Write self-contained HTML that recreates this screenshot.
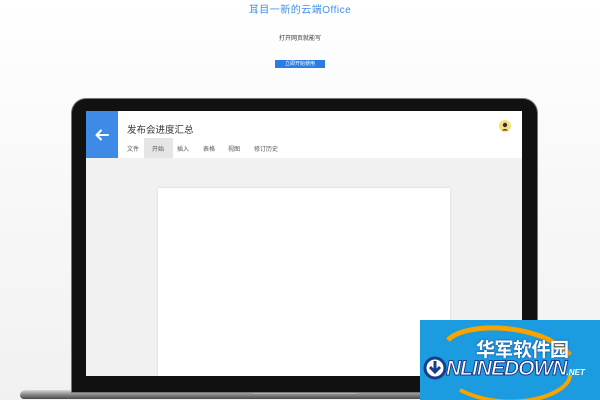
<!DOCTYPE html>
<html><head><meta charset="utf-8"><style>
*{margin:0;padding:0;box-sizing:border-box}
body{width:600px;height:400px;overflow:hidden;position:relative;background:linear-gradient(#fff 0%,#f9f9f9 40%,#f1f1f1 100%);font-family:"Liberation Sans","Noto Sans CJK SC",sans-serif}
.abs{position:absolute}
.tab{position:absolute;top:33px;font-size:6px;color:#555;white-space:nowrap}
</style></head><body>
<div class="abs" style="left:0;top:1px;width:600px;text-align:center;font-size:10px;color:#3d8fe6;letter-spacing:0.5px">耳目一新的云端Office</div>
<div class="abs" style="left:0;top:33px;width:600px;text-align:center;font-size:6px;color:#333">打开网页就能写</div>
<div class="abs" style="left:275px;top:60px;width:50px;height:8px;background:#2a7de1;color:#fff;font-size:5px;line-height:8px;text-align:center">立即开始使用</div>

<div class="abs" style="left:20px;top:390px;width:580px;height:9px;background:linear-gradient(#d8d8d8,#8a8a8a 50%,#4a4a4a);border-radius:8px 0 0 6px"></div>
<div class="abs" style="left:251px;top:390px;width:108px;height:4px;background:linear-gradient(#eee,#aaa);border-radius:0 0 5px 5px"></div>
<div class="abs" style="left:72px;top:99px;width:465px;height:293px;background:#111;border-radius:14px 14px 0 0;box-shadow:0 0 0 1px #777"></div>
<div class="abs" style="left:86px;top:111px;width:436px;height:265px;background:#f1f1f1;overflow:hidden">
  <div class="abs" style="left:0;top:0;width:436px;height:47px;background:#fff"></div>
  <div class="abs" style="left:0;top:0;width:32px;height:47px;background:#3d8be6">
    <svg width="32" height="47" viewBox="0 0 32 47"><path d="M11 24h11M15 19.5l-4.5 4.5 4.5 4.5" stroke="#fff" stroke-width="2" fill="none" stroke-linecap="round" stroke-linejoin="round"/></svg>
  </div>
  <div class="abs" style="left:41px;top:11px;font-size:9.5px;color:#333">发布会进度汇总</div>
  <div class="abs" style="left:58px;top:27px;width:29px;height:20px;background:#e5e5e5"></div>
  <div class="tab" style="left:41px">文件</div>
  <div class="tab" style="left:66px">开始</div>
  <div class="tab" style="left:91px">插入</div>
  <div class="tab" style="left:117px">表格</div>
  <div class="tab" style="left:142px">视图</div>
  <div class="tab" style="left:168px">修订历史</div>
  <svg class="abs" style="left:413px;top:9px" width="12" height="12" viewBox="0 0 12 12"><circle cx="6" cy="6" r="6" fill="#f6e27a"/><circle cx="6" cy="5" r="2.2" fill="#333"/><path d="M2.8 10.5q3.2-3 6.4 0" fill="#333"/></svg>
  <div class="abs" style="left:72px;top:77px;width:292px;height:200px;background:#fff;box-shadow:0 0 2px #ccc"></div>
</div>

<div class="abs" style="left:420px;top:320px;width:180px;height:80px;background:#1b9be0;overflow:hidden">
  <svg class="abs" style="left:0;top:0" width="180" height="80" viewBox="0 0 180 80">
    <path d="M28 20 C45 2,120 2,150 35" stroke="#f7a400" stroke-width="5" fill="none"/>
    <path d="M40 70 C90 95,150 75,150 55" stroke="#f7a400" stroke-width="4" fill="none"/>
    <circle cx="15" cy="48" r="10" fill="#fff" stroke="#1a3c8c" stroke-width="3"/>
    <path d="M15 41v10M10 47l5 5 5-5" stroke="#1a3c8c" stroke-width="3" fill="none"/>
  </svg>
  <div class="abs" style="left:56px;top:15px;font-size:19px;font-weight:bold;color:#fff;letter-spacing:-0.5px;text-shadow:0 0 2px #1a3c8c">华军软件园</div>
  <div class="abs" style="left:26px;top:37px;font-size:21px;font-weight:bold;font-style:italic;color:#fff;letter-spacing:-1px;-webkit-text-stroke:1px #1a3c8c;white-space:nowrap">NLINEDOWN<span style="font-size:8px;-webkit-text-stroke:0;color:#fff;letter-spacing:0">.NET</span></div>
</div>
</body></html>
